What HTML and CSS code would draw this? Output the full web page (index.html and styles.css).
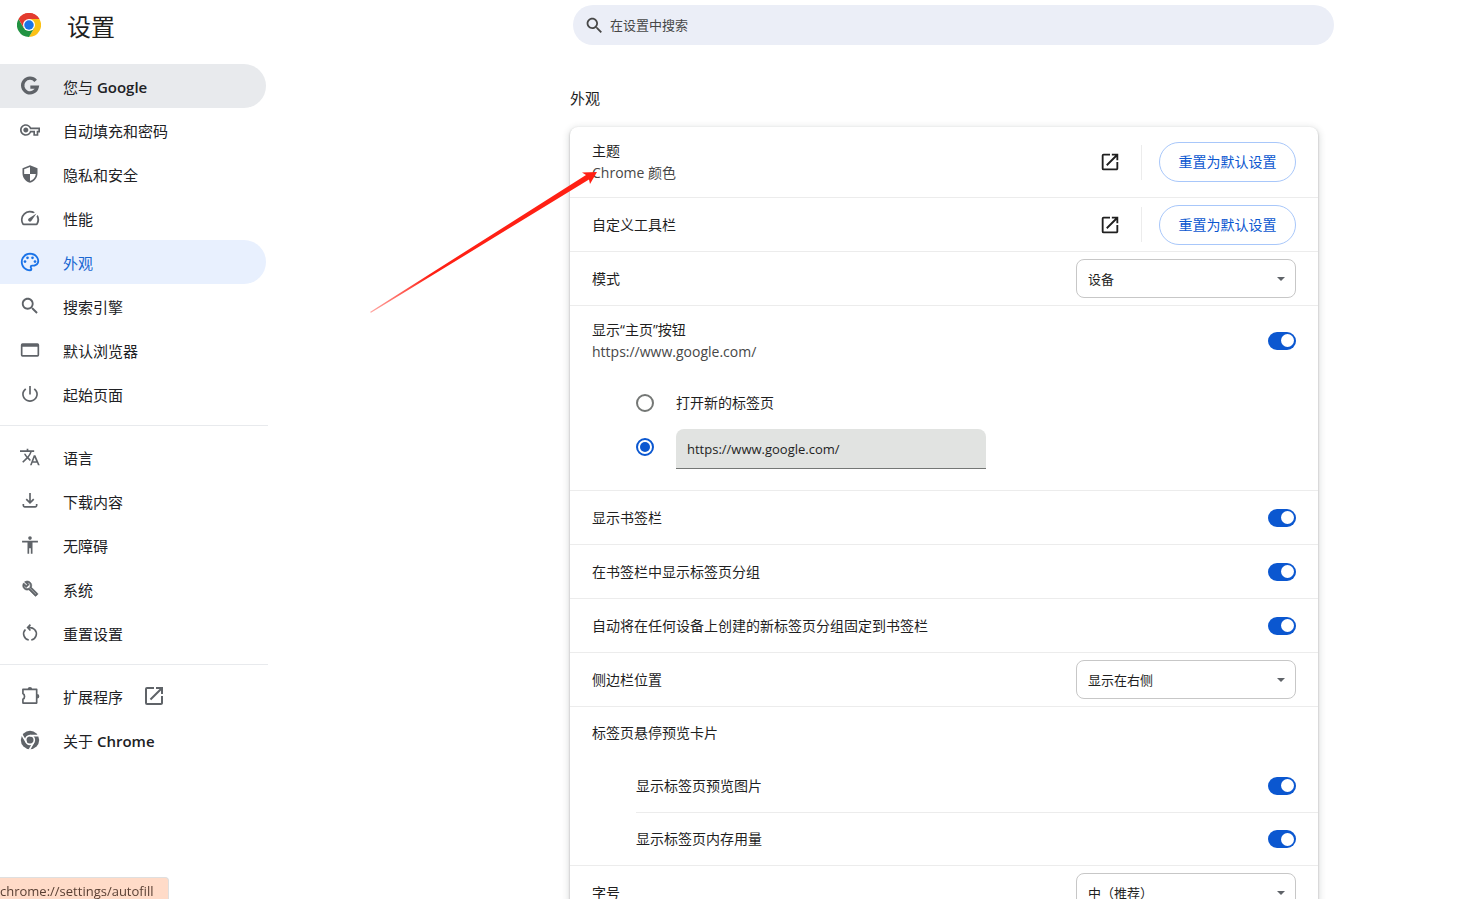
FILE: index.html
```html
<!DOCTYPE html>
<html lang="zh-CN">
<head>
<meta charset="utf-8">
<title>设置 - 外观</title>
<meta name="viewport" content="width=device-width, initial-scale=1">
<link rel="stylesheet" href="styles.css">
</head>
<body>
<svg class="defs" aria-hidden="true">
  <symbol id="i-open" viewBox="0 0 24 24"><path d="M19 19H5V5h7V3H5a2 2 0 0 0-2 2v14a2 2 0 0 0 2 2h14c1.1 0 2-.9 2-2v-7h-2v7zM14 3v2h3.59l-9.83 9.83 1.41 1.41L19 6.41V10h2V3h-7z"/></symbol>
  <symbol id="i-search" viewBox="0 0 24 24"><path d="M15.5 14h-.79l-.28-.27C15.41 12.59 16 11.11 16 9.5 16 5.91 13.09 3 9.5 3S3 5.91 3 9.5 5.91 16 9.5 16c1.61 0 3.09-.59 4.23-1.57l.27.28v.79l5 4.99L20.49 19l-4.99-5zm-6 0C7.01 14 5 11.99 5 9.5S7.01 5 9.5 5 14 7.01 14 9.5 11.99 14 9.5 14z"/></symbol>
</svg>
<div class="app">
  <header class="topbar">
    <div class="brand">
      <svg class="logo" viewBox="0 0 48 48" aria-hidden="true">
        <path fill="#e33b2e" d="M24 24 3.2 12A24 24 0 0 1 44.8 12Z"/>
        <path fill="#fbc116" d="M24 12H44.8A24 24 0 0 1 24 48L34.4 30Z"/>
        <path fill="#229342" d="M13.6 30 3.2 12A24 24 0 0 0 24 48L34.4 30Z"/>
        <path fill="#e33b2e" d="M3.2 12 13.6 30 24 12H44.8A24 24 0 0 0 3.2 12Z"/>
        <circle cx="24" cy="24" r="12" fill="#fff"/>
        <circle cx="24" cy="24" r="9.5" fill="#1a73e8"/>
      </svg>
      <h1 class="title">设置</h1>
    </div>
    <div class="search-area">
      <label class="search">
        <svg class="search-icon" aria-hidden="true"><use href="#i-search"/></svg>
        <input class="search-input" type="search" placeholder="在设置中搜索" aria-label="在设置中搜索">
      </label>
    </div>
  </header>
  <div class="body">
    <nav class="sidebar" aria-label="设置">
      <div class="group">
        <a class="item hovered" href="#people"><svg class="icon" viewBox="0 0 24 24"><path class="g-mark" d="M18.800 5.800A8.800 8.800 0 1 0 20.600 13.300H12.400"/></svg><span>您与 <b>Google</b></span></a>
        <a class="item" href="#autofill"><svg class="icon" viewBox="0 0 24 24"><path d="M22 19h-6v-4h-2.68c-1.14 2.42-3.6 4-6.32 4-3.86 0-7-3.14-7-7s3.14-7 7-7c2.72 0 5.17 1.58 6.32 4H24v6h-2v4zm-4-2h2v-4h2v-2H11.94l-.23-.67C11.01 8.34 9.11 7 7 7c-2.76 0-5 2.24-5 5s2.24 5 5 5c2.11 0 4.01-1.34 4.71-3.33l.23-.67H18v4zM7 15c-1.65 0-3-1.35-3-3s1.35-3 3-3 3 1.35 3 3-1.35 3-3 3z"/></svg><span>自动填充和密码</span></a>
        <a class="item" href="#privacy"><svg class="icon" viewBox="0 0 24 24"><path d="M12 1.5 3 5v6c0 5.55 3.84 10.2 9 11.5 5.16-1.300 9-5.95 9-11.500V5l-9-3.500zm0 10.500h7c-.53 4.120-3.280 7.300-7 8.400V12H5V6.400l7-2.800V12z"/></svg><span>隐私和安全</span></a>
        <a class="item" href="#performance"><svg class="icon" viewBox="1 1 22 22"><path d="M20.38 8.57l-1.23 1.85a8 8 0 0 1-.22 7.58H5.07A8 8 0 0 1 15.58 6.85l1.85-1.23A10 10 0 0 0 3.35 19a2 2 0 0 0 1.72 1h13.85a2 2 0 0 0 1.74-1 10 10 0 0 0-.27-10.44zm-9.79 6.84a2 2 0 0 0 2.83 0l5.66-8.49-8.49 5.66a2 2 0 0 0 0 2.83z"/></svg><span>性能</span></a>
        <a class="item selected" href="#appearance" aria-current="page"><svg class="icon" viewBox="0 0 24 24"><path d="M12 23C5.900 23 1 18.100 1 12S5.900 1 12 1s11 4.500 11 9.900c0 3.700-3 6.600-6.600 6.600h-1.900c-.3 0-.6.3-.6.6 0 .1.1.3.2.4.4.5.7 1.100.7 1.800A2.700 2.700 0 0 1 12 23zm0-19.800c-4.900 0-8.800 3.900-8.800 8.800s3.900 8.800 8.800 8.800c.3 0 .6-.3.6-.6 0-.2-.1-.3-.2-.4-.4-.5-.7-1.100-.7-1.800a2.800 2.800 0 0 1 2.800-2.800h1.900c2.400 0 4.400-2 4.400-4.400 0-4.200-3.900-7.600-8.800-7.600z"/><circle cx="6" cy="11.500" r="1.600"/><circle cx="9" cy="7" r="1.600"/><circle cx="15" cy="7" r="1.600"/><circle cx="18" cy="11.500" r="1.600"/></svg><span>外观</span></a>
        <a class="item" href="#search"><svg class="icon" viewBox="1 1 22 22"><use href="#i-search" width="24" height="24"/></svg><span>搜索引擎</span></a>
        <a class="item" href="#browser"><svg class="icon" viewBox="0 0 24 24"><path fill-rule="evenodd" d="M3 4h18a2 2 0 0 1 2 2v12a2 2 0 0 1-2 2H3a2 2 0 0 1-2-2V6a2 2 0 0 1 2-2zm0 4v10h18V8z"/></svg><span>默认浏览器</span></a>
        <a class="item" href="#startup"><svg class="icon" viewBox="0 0 24 24"><path d="M13 2.500h-2v10h2v-10zm4.830 2.670l-1.420 1.420C17.990 7.860 19.500 9.810 19.500 12c0 4.100-3.400 7.500-7.500 7.500S4.500 16.100 4.500 12c0-2.190 1.510-4.140 3.080-5.420L6.170 5.170C4.230 6.820 2.500 9.260 2.500 12c0 5.200 4.300 9.500 9.500 9.500s9.500-4.300 9.500-9.500c0-2.740-1.730-5.180-3.670-6.830z"/></svg><span>起始页面</span></a>
      </div>
      <div class="group">
        <a class="item" href="#languages"><svg class="icon" viewBox="0 0 24 24"><path d="M12.870 15.070l-2.540-2.510.03-.03c1.740-1.940 2.980-4.170 3.710-6.530H17V4h-7V2H8v2H0v1.990h12.170C11.500 7.920 10.440 9.750 9 11.350 8.070 10.320 7.300 9.190 6.690 8h-2c.73 1.630 1.730 3.170 2.980 4.560l-5.090 5.020L4 19l5-5 3.110 3.110.76-2.040zM18.500 10h-2L12 22h2l1.120-3h5.250L21.500 22h2.200l-5.200-12zm-2.620 7l1.620-4.330L19.300 17h-3.420z"/></svg><span>语言</span></a>
        <a class="item" href="#downloads"><svg class="icon line" viewBox="0 0 24 24"><path d="M12 2.500v11.500M7.500 9.700 12 14.200l4.500-4.500M4 15.500v2a1.500 1.500 0 0 0 1.500 1.500h13a1.500 1.500 0 0 0 1.500-1.500v-2"/></svg><span>下载内容</span></a>
        <a class="item" href="#accessibility"><svg class="icon" viewBox="0 0 24 24"><path d="M12 1.500a2.200 2.200 0 1 1 0 4.400 2.200 2.200 0 0 1 0-4.400zM21.500 9H15v13.500h-2v-6.500h-2v6.500H9V9H2.500V7h19v2z"/></svg><span>无障碍</span></a>
        <a class="item" href="#system"><svg class="icon wrench" viewBox="-3 -2 29 29"><path d="M22.610 18.990l-9.080-9.080c.93-2.340.45-5.100-1.440-7C9.790.61 6.210.4 3.660 2.260L7.500 6.110 6.080 7.520 2.250 3.690C.39 6.230.6 9.820 2.900 12.110c1.860 1.860 4.570 2.350 6.890 1.480l9.110 9.110c.39.39 1.020.39 1.410 0l2.300-2.300c.4-.38.4-1.010 0-1.410zm-3 1.600l-9.460-9.460c-.61.45-1.290.72-2 .82-1.360.2-2.790-.21-3.830-1.250C3.370 9.760 2.930 8.500 3 7.260l3.090 3.090 4.240-4.240-3.090-3.090c1.240-.07 2.490.37 3.440 1.310 1.080 1.080 1.490 2.570 1.240 3.960-.12.71-.42 1.370-.88 1.960l9.450 9.450-.88.89z"/></svg><span>系统</span></a>
        <a class="item" href="#reset"><svg class="icon line" viewBox="0 0 24 24"><path d="M10.500 20.400A7.500 7.500 0 0 1 6.500 7.800M17.500 7.800A7.500 7.500 0 0 1 13.500 20.400M12.500 2 9.200 5.500l3.300 3.500M9.200 5.500H12a8 8 0 0 1 5.500 2.300"/></svg><span>重置设置</span></a>
      </div>
      <div class="group">
        <a class="item" href="#extensions"><svg class="icon" viewBox="0 0 24 24"><path class="outline" d="M3.500 4H20v16.500H3.500v-4.500c2.600-1.500 2.600-5.500 0-7z"/><path d="M9.200 4a2.700 2.700 0 0 1 5.400 0zM20.500 9.500a2.700 2.700 0 0 1 0 5.400z"/></svg><span>扩展程序</span><svg class="icon-ext" aria-hidden="true"><use href="#i-open"/></svg></a>
        <a class="item" href="#about"><svg class="icon" viewBox="0 0 24 24"><circle cx="12" cy="12" r="11"/><circle class="gap" cx="12" cy="12" r="5.200"/><path class="gap" d="M12 6.800H22.500M7.500 14.600 2.200 5.600M16.500 14.600 11.300 23.600"/><circle cx="12" cy="12" r="3.700"/></svg><span>关于 <b>Chrome</b></span></a>
      </div>
    </nav>
    <main class="main">
      <section class="page">
        <h2 class="heading">外观</h2>
        <div class="card">
          <div class="row tall">
            <div class="text"><div>主题</div><div class="sub">Chrome 颜色</div></div>
            <button class="icon-btn" aria-label="打开主题"><svg><use href="#i-open"/></svg></button>
            <span class="vsep"></span>
            <button class="pill">重置为默认设置</button>
          </div>
          <div class="row">
            <div class="text">自定义工具栏</div>
            <button class="icon-btn" aria-label="打开自定义工具栏"><svg><use href="#i-open"/></svg></button>
            <span class="vsep"></span>
            <button class="pill">重置为默认设置</button>
          </div>
          <div class="row">
            <label class="text" for="mode">模式</label>
            <div class="select"><select id="mode"><option>设备</option><option>浅色</option><option>深色</option></select></div>
          </div>
          <div class="section home">
            <div class="row tall">
              <label class="text" for="home"><span class="block">显示“主页”按钮</span><span class="block sub">https://www.google.com/</span></label>
              <input class="toggle" id="home" type="checkbox" checked>
            </div>
            <div class="choices">
              <label class="choice"><input class="radio" type="radio" name="hp"><span>打开新的标签页</span></label>
              <div class="choice"><input class="radio" type="radio" name="hp" checked aria-label="自定义网址"><input class="url" type="text" value="https://www.google.com/" aria-label="网址"></div>
            </div>
          </div>
          <div class="row"><label class="text" for="bm">显示书签栏</label><input class="toggle" id="bm" type="checkbox" checked></div>
          <div class="row"><label class="text" for="tg">在书签栏中显示标签页分组</label><input class="toggle" id="tg" type="checkbox" checked></div>
          <div class="row"><label class="text" for="pin">自动将在任何设备上创建的新标签页分组固定到书签栏</label><input class="toggle" id="pin" type="checkbox" checked></div>
          <div class="row">
            <label class="text" for="side">侧边栏位置</label>
            <div class="select"><select id="side"><option>显示在右侧</option><option>显示在左侧</option></select></div>
          </div>
          <div class="section">
            <div class="row last"><div class="text">标签页悬停预览卡片</div></div>
            <div class="nested">
              <div class="row"><label class="text" for="img">显示标签页预览图片</label><input class="toggle" id="img" type="checkbox" checked></div>
              <div class="row last"><label class="text" for="mem">显示标签页内存用量</label><input class="toggle" id="mem" type="checkbox" checked></div>
            </div>
          </div>
          <div class="row">
            <label class="text" for="size">字号</label>
            <div class="select"><select id="size"><option>中（推荐）</option><option>大</option></select></div>
          </div>
          <svg class="pointer" viewBox="0 0 230 146" aria-hidden="true">
            <defs><linearGradient id="fade" gradientUnits="userSpaceOnUse" x1="1" y1="143" x2="60" y2="106"><stop offset="0" stop-color="#ff2014" stop-opacity=".4"/><stop offset="1" stop-color="#ff2014"/></linearGradient></defs>
            <path fill="url(#fade)" d="M0 143 216 6 212 3.500 227 3 220 15 219 10.500 1 143.800Z"/>
          </svg>
        </div>
      </section>
    </main>
  </div>
  <div class="status">chrome://settings/autofill</div>
</div>
</body>
</html>
```
FILE: styles.css
```css
* { box-sizing: border-box; }
body {
  margin: 0;
  background: #fff;
  color: #1f1f1f;
  font: 14px/22px "Open Sans", "Noto Sans CJK SC", sans-serif;
}
button, input, select { font: inherit; color: inherit; margin: 0; }
.defs { display: none; }
.app { display: flex; flex-direction: column; height: 100vh; overflow: hidden; }

.topbar { display: flex; flex: none; height: 56px; }
.brand { display: flex; align-items: center; gap: 26px; width: 268px; flex: none; height: 50px; padding-left: 17px; }
.logo { width: 24px; height: 24px; }
.title { margin: 0; padding-top: 4px; font-size: 24px; line-height: 32px; font-weight: 400; }
.search-area { flex: 1; display: grid; grid-template-columns: 305fr minmax(0, 761px) 146fr; align-items: start; padding-top: 5px; }
.search { grid-column: 2; display: flex; align-items: center; gap: 5px; height: 40px; padding: 0 12px 0 11px; border-radius: 20px; background: #ebeef7; }
.search-icon { width: 21px; height: 21px; fill: #474747; flex: none; }
.search-input { flex: 1; min-width: 0; padding: 0; border: 0; outline: 0; background: none; font-size: 13px; appearance: none; }
.search-input::placeholder { color: #474747; opacity: 1; }

.body { display: flex; flex: 1; min-height: 0; }
.sidebar { width: 268px; flex: none; padding-top: 8px; color: #202124; }
.group + .group { margin-top: 9px; padding-top: 9px; border-top: 1px solid #e8eaed; }
.item { display: flex; align-items: center; height: 44px; width: 266px; padding-left: 20px; border-radius: 0 22px 22px 0; font-size: 15px; color: inherit; text-decoration: none; }
.item span { padding-top: 1px; }
.item b { font-weight: 600; }
.icon { width: 20px; height: 20px; margin-right: 23px; fill: #5f6368; flex: none; }
.icon-ext { width: 24px; height: 24px; margin-left: 19px; fill: #5f6368; }
.line { fill: none; stroke: #5f6368; stroke-width: 2; }
.outline { fill: none; stroke: #5f6368; stroke-width: 2; stroke-linejoin: round; }
.wrench { stroke: #5f6368; stroke-width: 1; }
.g-mark { fill: none; stroke: #5f6368; stroke-width: 4; }
.gap { fill: none; stroke: #fff; stroke-width: 2; }
.hovered { background: #e8eaed; }
.selected { background: #e8f0fe; color: #1967d2; }
.selected .icon { fill: #1a73e8; }

.main { flex: 1; min-width: 0; display: grid; grid-template-columns: 151fr minmax(0, 748px) 81fr; overflow-y: auto; scrollbar-width: none; }
.page { grid-column: 2; }
.heading { margin: 0; padding: 31px 0 18px; font-size: 15px; line-height: 22px; font-weight: 400; }
.card { position: relative; border-radius: 8px; background: #fff; box-shadow: 0 1px 2px rgba(60, 64, 67, .4), 0 2px 6px 2px rgba(60, 64, 67, .15); }
.row { display: flex; align-items: center; min-height: 54px; padding: 0 22px; border-bottom: 1px solid #ececec; }
.row.tall { min-height: 71px; }
.row.last, .home .row { border-bottom: 0; }
.home .row { min-height: 69px; }
.row.last { min-height: 52px; }
.section { border-bottom: 1px solid #ececec; }
.text { flex: 1; }
.block { display: block; }
.sub { color: #474747; }
.icon-btn { display: flex; padding: 0; border: 0; background: none; }
.icon-btn svg { width: 22px; height: 22px; fill: #1f1f1f; }
.vsep { width: 1px; height: 35px; margin: 0 17px 0 20px; background: #ececec; }
.pill { min-width: 137px; height: 40px; padding: 0 17px; border: 1px solid #a8c7fa; border-radius: 20px; background: #fff; color: #0b57d0; }

.select { position: relative; width: 220px; }
.select select { display: block; width: 100%; height: 39px; padding: 0 30px 0 11px; border: 1px solid #c7c7c7; border-radius: 8px; background: #fff; font-size: 13px; appearance: none; }
.select::after { content: ""; position: absolute; right: 11px; top: 18px; border: 4px solid transparent; border-top-color: #5f6368; border-bottom: 0; pointer-events: none; }

.toggle { appearance: none; display: flex; align-items: center; justify-content: flex-end; width: 28px; height: 18px; padding: 0 2px; border-radius: 9px; background: #0b57d0; }
.toggle::after { content: ""; width: 13px; height: 13px; border-radius: 50%; background: #fff; }

.choices { padding: 6px 22px 21px 66px; }
.choice { display: flex; align-items: center; gap: 22px; height: 44px; }
.radio { appearance: none; display: grid; place-items: center; width: 18px; height: 18px; border: 2px solid #747775; border-radius: 50%; flex: none; }
.radio:checked { border-color: #0b57d0; }
.radio:checked::after { content: ""; width: 10px; height: 10px; border-radius: 50%; background: #0b57d0; }
.url { width: 310px; height: 40px; align-self: flex-end; padding: 0 11px; border: 0; border-bottom: 1px solid #747775; border-radius: 8px 8px 0 0; background: #e1e3e1; font-size: 13px; }

.nested { padding-left: 66px; }
.nested .row { padding-left: 0; }

.pointer { position: absolute; left: -200px; top: 42px; width: 230px; height: 146px; pointer-events: none; }
.status { position: fixed; left: 0; bottom: 0; height: 22px; padding: 3px 14px 0 0; border: 1px solid #dfdfdf; border-width: 1px 1px 0 0; border-radius: 0 4px 0 0; background: #ffdbc8; color: #5a4034; font-size: 13px; line-height: 20px; }
```
